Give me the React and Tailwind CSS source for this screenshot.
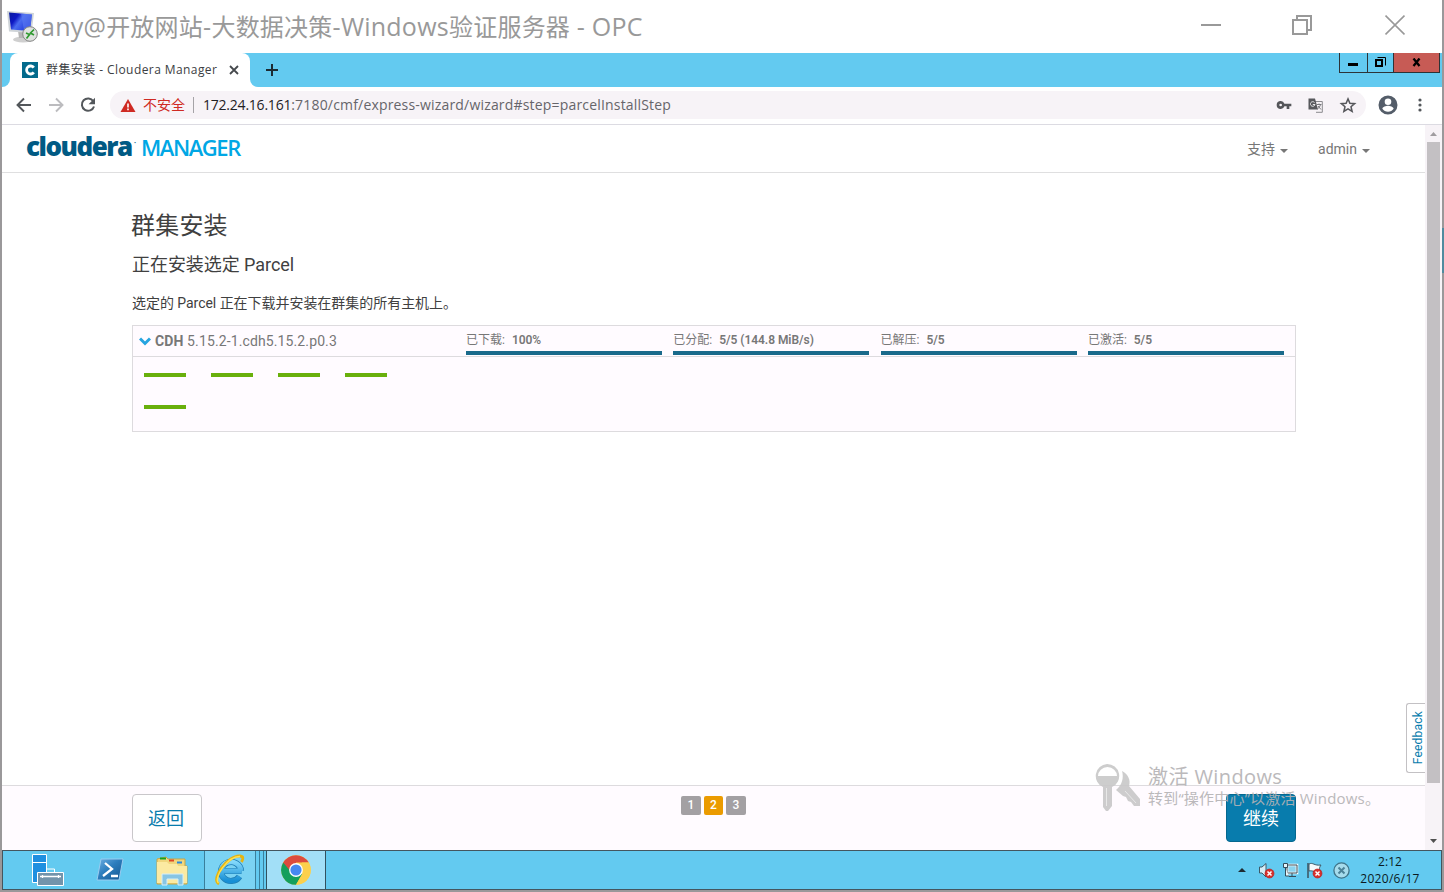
import React from 'react';

const segoe = "font-['Open_Sans','Noto_Sans_CJK_SC',sans-serif]";
const roboto = "font-['Roboto','Noto_Sans_CJK_SC',sans-serif]";

function RemoteIcon() {
  return (
    <svg width="32" height="34" viewBox="0 0 32 34" className="shrink-0">
      <defs>
        <linearGradient id="scr" x1="0" y1="0" x2="1" y2="0.6">
          <stop offset="0" stopColor="#0a1c9c" />
          <stop offset="0.35" stopColor="#0d18c4" />
          <stop offset="0.55" stopColor="#4a6cf0" />
          <stop offset="1" stopColor="#2038d8" />
        </linearGradient>
      </defs>
      <ellipse cx="17" cy="29.5" rx="10" ry="3" fill="#cfcfcf" />
      <path d="M12 21l9 1v6l-8 0z" fill="#b5b5b5" />
      <path d="M1 1L28 3l-2.500 20L3 21.500z" fill="#cfd4d8" />
      <path d="M3 2.500L26 4.500l-2 16.500L5 19.500z" fill="url(#scr)" />
      <path d="M15 3.600L26 4.500l-2 16.500-6-.5z" fill="#5b7cf2" opacity="0.6" />
      <circle cx="24" cy="24" r="7.300" fill="#dfe2df" stroke="#858585" />
      <path d="M20 23l3.500 1.500-3 4M28 19.500l-3.500 3.500 3.500 2" fill="none" stroke="#2f9a2f" strokeWidth="1.700" />
    </svg>
  );
}

function TitleBar() {
  return (
    <div className="flex h-[53px] shrink-0 items-start bg-white">
      <div className="pl-1 pt-[10px]"><RemoteIcon /></div>
      <div className={`${segoe} ml-[3px] mt-[8px] whitespace-nowrap text-[25px] leading-[36px] tracking-[0.24px] text-[#999]`}>
        any@<span className="text-[24px]">开放网站</span>-<span className="text-[24px]">大数据决策</span>-Windows<span className="text-[24px]">验证服务器</span> - OPC
      </div>
      <div className="ml-auto flex items-center pr-[37px] pt-[14px]">
        <div className="mr-[71px] h-[2px] w-5 bg-[#999]" />
        <svg width="20" height="22" viewBox="0 0 20 22" fill="none" stroke="#999" strokeWidth="2" className="mr-[73px]">
          <path d="M1 6h14v14H1zM5 5.500V2h14v14h-3.500" />
        </svg>
        <svg width="20" height="22" viewBox="0 0 20 22" fill="none" stroke="#999" strokeWidth="1.700">
          <path d="M0.500 1.500l19 19M19.500 1.500l-19 19" />
        </svg>
      </div>
    </div>
  );
}

function TabStrip() {
  return (
    <div className="flex h-[34px] shrink-0 bg-white">
      <div className="w-2 shrink-0 rounded-br-[8px] bg-[#63caf0]" />
      <div className="flex w-[240px] shrink-0 bg-[#63caf0]">
        <div className="flex w-full items-center rounded-t-[8px] bg-white pl-3">
          <svg width="16" height="16" viewBox="0 0 16 16">
            <path d="M0 0h16v16H0z" fill="#036a8c" />
            <path d="M11.800 5.600A4 4 0 1 0 11.800 10.400" fill="none" stroke="#fff" strokeWidth="2.800" />
          </svg>
          <span className={`${segoe} ml-2 w-[180px] whitespace-nowrap text-[12px] tracking-[0.42px] text-[#3c4043]`}>群集安装 - Cloudera Manager</span>
          <svg width="10" height="10" viewBox="0 0 10 10" className="ml-[3px] shrink-0" stroke="#45494d" strokeWidth="1.800">
            <path d="M1 1l8 8M9 1l-8 8" />
          </svg>
        </div>
      </div>
      <div className="flex flex-1 rounded-bl-[8px] bg-[#63caf0]">
        <svg width="12" height="12" viewBox="0 0 12 12" className="ml-4 mt-[11px]" stroke="#1c2b33" strokeWidth="2">
          <path d="M0 6h12M6 0v12" />
        </svg>
        <div className="ml-auto mr-[2px] flex h-5 border-x border-b border-[#2d3337]">
          <div className="flex w-[27px] justify-center pr-px pt-[10px]"><div className="h-[3px] w-[10px] bg-black" /></div>
          <div className="flex w-[26px] justify-center border-l border-[#2d3337] pt-1">
            <svg width="11" height="11" viewBox="0 0 11 11" fill="none" stroke="#000">
              <path d="M1 3h6v6H1z" strokeWidth="2" />
              <path d="M2.500 .5h8v8" />
            </svg>
          </div>
          <div className="flex w-[46px] justify-center border-l border-[#2d3337] bg-[#c75b55] pt-[5px]">
            <svg width="10" height="9" viewBox="0 0 10 9" stroke="#000" strokeWidth="2.300"><path d="M1.500 .5l6 7.500M7.500 .5l-6 7.500" /></svg>
          </div>
        </div>
      </div>
    </div>
  );
}

function Toolbar() {
  return (
    <div className="flex h-[38px] shrink-0 items-center border-b border-[#dcdbe2] bg-white pb-px">
      <svg width="16" height="16" viewBox="0 0 16 16" className="ml-[14px]" fill="none" stroke="#53575b" strokeWidth="1.900">
        <path d="M15 8H2M8 1.500L1.500 8 8 14.500" />
      </svg>
      <svg width="16" height="16" viewBox="0 0 16 16" className="ml-4" fill="none" stroke="#bcbcbf" strokeWidth="1.900">
        <path d="M1 8h13M8 1.500L14.500 8 8 14.500" />
      </svg>
      <svg width="16" height="16" viewBox="0 0 16 16" className="ml-4" fill="none" stroke="#53575b" strokeWidth="2">
        <path d="M13.300 4.200A6.200 6.200 0 1 0 14 9.500" />
        <path d="M15 .8v6.400H8.600z" fill="#53575b" stroke="none" />
      </svg>
      <div className="ml-[14px] flex h-7 w-[1256px] items-center rounded-full bg-[#f7f3f7]">
        <svg width="16" height="13" viewBox="0 0 16 13" className="ml-[10px]">
          <path d="M8 0l7.500 13H.5z" fill="#cf2a23" />
          <path d="M7.200 4.500h1.600v4H7.200zM7.200 9.600h1.600v1.600H7.200z" fill="#fff" />
        </svg>
        <span className={`${segoe} ml-[7px] mt-[-2px] text-[14px] text-[#cf2a23]`}>不安全</span>
        <div className="ml-2 h-4 w-px bg-[#a5a3a7]" />
        <span className={`${segoe} ml-[9px] mt-[-2px] whitespace-nowrap text-[14px] tracking-[0.18px] text-[#66656a]`}>
          <span className="tracking-[-0.22px] text-[#1f2124]">172.24.16.161</span>:7180/cmf/express-wizard/wizard#step=parcelInstallStep
        </span>
        <svg width="16" height="16" viewBox="0 0 24 24" className="ml-auto" fill="#55565a">
          <path d="M12.650 10A6 6 0 0 0 1 12a6 6 0 0 0 11.650 2H16v4h4v-4h3v-4zM7 14a2 2 0 1 1 0-4 2 2 0 0 1 0 4z" />
        </svg>
        <svg width="15" height="15" viewBox="0 0 15 15" className="ml-4">
          <path d="M5.500 3.500h8.800v10.800H8" fill="#f7f3f7" stroke="#8a8a8e" />
          <path d="M.5.500h6.500l3 11H.5z" fill="#57585c" />
          <path d="M6.500 4.500A2.300 2.300 0 1 0 7 6.500H4.800" fill="none" stroke="#e8e8ea" />
          <path d="M8.500 6.500h5M11 5.500v1M12.500 6.500c-.5 2-1.500 3.500-3 4.500M10 8l3 3.500" fill="none" stroke="#77787c" />
        </svg>
        <svg width="18" height="18" viewBox="0 0 24 24" className="ml-4 mr-[9px]" fill="none" stroke="#55565a" strokeWidth="2">
          <path d="M12 3.800l2.500 5.900 6.400.5-4.900 4.200 1.500 6.200-5.500-3.300-5.500 3.300L8 14.400 3.100 10.200l6.400-.5z" />
        </svg>
      </div>
      <svg width="24" height="24" viewBox="0 0 24 24" className="ml-[10px]" fill="#545d69">
        <path d="M12 2.500a9.500 9.500 0 1 0 0 19 9.500 9.500 0 0 0 0-19zm0 3a3.300 3.300 0 1 1 0 6.600 3.300 3.300 0 0 1 0-6.600zm0 13.200a6.700 6.700 0 0 1-5.600-3c0-1.900 3.800-2.900 5.600-2.900s5.600 1 5.600 2.900a6.700 6.700 0 0 1-5.600 3z" />
      </svg>
      <svg width="4" height="14" viewBox="0 0 4 14" className="ml-[18px]" fill="#53575b">
        <circle cx="2" cy="2" r="1.600" /><circle cx="2" cy="7" r="1.600" /><circle cx="2" cy="12" r="1.600" />
      </svg>
    </div>
  );
}

function Caret() {
  return <svg width="8" height="4" viewBox="0 0 8 4" className="mt-[3px]"><path d="M0 0h8L4 4z" fill="#777" /></svg>;
}

function ClouderaHeader() {
  return (
    <div className={`flex h-12 shrink-0 items-start border-b border-[#dfdfe0] bg-white pl-[24px] ${roboto}`}>
      <div className="mt-[5px] flex items-baseline whitespace-nowrap leading-[32px]">
        <span className="w-[108px] font-['Open_Sans',sans-serif] text-[26px] font-extrabold tracking-[-1.5px] text-[#005a84]">cloudera</span>
        <span className="w-[3px] text-[6px] text-[#005a84]"><span className="relative top-[-11px]">•</span></span>
        <span className="ml-[4px] font-['Open_Sans',sans-serif] text-[22px] font-semibold tracking-[-1.45px] text-[#00a7e5]">MANAGER</span>
      </div>
      <div className="ml-auto flex items-center gap-[5px] pt-[14px] text-[14px] leading-[20px] text-[#777]">
        支持 <Caret />
      </div>
      <div className="ml-[30px] mr-[55px] flex items-center gap-[5px] pt-[14px] text-[14px] leading-[20px] text-[#777]">
        admin <Caret />
      </div>
    </div>
  );
}

const stages = [
  ['已下载:', '100%'],
  ['已分配:', '5/5 (144.8 MiB/s)'],
  ['已解压:', '5/5'],
  ['已激活:', '5/5'],
];

function ParcelTable() {
  return (
    <div className="mt-[12px] h-[107px] w-[1164px] border border-[#dddbde] bg-[#fffbff]">
      <div className="flex h-[31px] border-b border-[#dddbde] text-[#777]">
        <div className="flex w-[333px] items-center pl-[6px] text-[14px]">
          <svg width="12" height="9" viewBox="0 0 12 9" fill="none" stroke="#27a5e0" strokeWidth="3"><path d="M1 1.500l5 5 5-5" /></svg>
          <span className="ml-[4px] whitespace-nowrap tracking-[0.12px]"><b>CDH</b> 5.15.2-1.cdh5.15.2.p0.3</span>
        </div>
        <div className="flex gap-[11.300px]">
          {stages.map(([label, value]) => (
            <div key={label} className="flex w-[196px] flex-col">
              <div className="flex h-[25px] items-center gap-[7px] whitespace-nowrap pt-[3px] text-[12px]">
                <span>{label}</span>
                <b className="font-semibold tracking-[-0.05px]">{value}</b>
              </div>
              <div className="h-1 bg-[#196a8b]" />
            </div>
          ))}
        </div>
      </div>
      <div className="grid w-[279px] grid-cols-4 gap-y-7 pl-[11px] pt-4">
        {[0, 1, 2, 3, 4].map((n) => <div key={n} className="w-[67px]"><div className="h-1 w-[42px] bg-[#69b00c]" /></div>)}
      </div>
    </div>
  );
}

function ScrollBar() {
  return (
    <div className="flex w-[17px] shrink-0 flex-col items-center bg-[#f7f3f7]">
      <svg width="7" height="4" viewBox="0 0 7 4" className="mt-[7px]"><path d="M0 4h7L3.500 0z" fill="#a09da0" /></svg>
      <div className="mt-[6px] h-[641px] w-[13px] bg-[#c3c0c3]" />
      <svg width="7" height="4" viewBox="0 0 7 4" className="mb-[7px] mt-auto"><path d="M0 0h7L3.500 4z" fill="#505050" /></svg>
    </div>
  );
}

function Footer() {
  return (
    <div className={`flex h-[65px] shrink-0 items-start justify-between border-t border-[#dddbde] bg-[#fffbff] pl-[130px] pr-[129px] pt-2 ${roboto}`}>
      <div className="flex h-12 w-[70px] items-center justify-center rounded-[4px] border border-[#c9c7ca] bg-white pr-[2px] text-[18px] text-[#087cad]">返回</div>
      <div className="mr-[1px] mt-[2px] flex gap-[3px] text-center text-[12px] font-medium leading-[19px] text-white">
        <div className="w-5 rounded-[2px] bg-[#a3a0a3]">1</div>
        <div className="w-[19px] rounded-[2px] bg-[#eb9b00]">2</div>
        <div className="w-5 rounded-[2px] bg-[#a3a0a3]">3</div>
      </div>
      <div className="flex h-12 w-[70px] items-center justify-center rounded-[4px] border border-[#05678f] bg-[#087cad] text-[18px] text-white">继续</div>
    </div>
  );
}

function Watermark() {
  return (
    <div className={`absolute left-[1090px] top-[761px] flex text-[#b4b2b4] opacity-90 ${segoe}`}>
      <svg width="50" height="52" viewBox="0 0 50 52" fill="#c8c8c8">
        <path d="M30 10c6 3 9 9 7 15l11 13v7h-6l-3-4-3-1-2-4-3-1-7-6c6-5 8-12 6-19z" />
        <path fillRule="evenodd" d="M15 3a12 12 0 0 1 5 23v19l-4 5h-2l-3-4V26A12 12 0 0 1 15 3zM6 15h19a9.500 9 0 0 0-19 0z" />
        <path d="M14.500 27v18M33 30l11 12" stroke="#e6e6e6" strokeWidth="1" />
      </svg>
      <div className="ml-[6px] whitespace-nowrap">
        <div className="text-[20px] leading-[32px] tracking-[0.4px]">激活 Windows</div>
        <div className="mt-[-6px] text-[15px] leading-[22px] tracking-[0.2px]">转到“操作中心”以激活 Windows。</div>
      </div>
    </div>
  );
}

function ErrorBadge() {
  return <g><circle cx="11.500" cy="11.500" r="4.500" fill="#d8302c" stroke="#b01d1d" strokeWidth=".6" /><path d="M9.500 9.500l4 4M13.500 9.500l-4 4" stroke="#fff" strokeWidth="1.500" /></g>;
}

function Taskbar() {
  return (
    <div className="flex h-10 shrink-0 border border-[#44565f] bg-[#63caf0]">
      <svg width="34" height="34" viewBox="0 0 34 34" className="ml-[28px] mt-[2px]">
        <path d="M1.500 1.500h14v28h-14z" fill="#1f8fe0" stroke="#fff" />
        <path d="M1.500 9.500h14" stroke="#fff" />
        <path d="M15.500 17v-1h8v3" fill="none" stroke="#fff" />
        <path d="M6.500 19.500h26v13h-26z" fill="#7394ab" stroke="#fff" />
        <path d="M9 23.500h21M11.500 22v3M27.500 22v3" stroke="#fff" strokeWidth="1.300" />
      </svg>
      <svg width="30" height="26" viewBox="0 0 30 26" className="ml-[29px] mt-[6px]">
        <defs><linearGradient id="ps" x1="0" y1="0" x2="1" y2="1"><stop stopColor="#6fb0e4" /><stop offset=".45" stopColor="#2c7dbd" /><stop offset="1" stopColor="#14568f" /></linearGradient></defs>
        <path d="M7 2h22l-4 21H3z" fill="url(#ps)" stroke="#9accf0" />
        <path d="M11 6l7 6-9 7M17 19h7" fill="none" stroke="#fff" strokeWidth="2.300" />
      </svg>
      <svg width="34" height="30" viewBox="0 0 34 30" className="ml-[31px] mt-[5px]">
        <path d="M2 3l9-2 2 2h17v7h2v18H2z" fill="#f0d77d" stroke="#c9a545" />
        <path d="M5 1.500h6v2H5z" fill="#18a020" /><path d="M14 3.500h5v2h-5z" fill="#e04824" /><path d="M22 5.500h5v2h-5z" fill="#2a88dc" />
        <path d="M2 6l10 0 2 2h8l1 2h9v17H2z" fill="#fbeaa2" />
        <path d="M7 18h21v11h-5v-6H12v6H7z" fill="#87c5e4" stroke="#d5eff9" />
      </svg>
      <div className="ml-[15px] flex w-[52px] items-center justify-center border-x border-[#397f9c] bg-[#7bd3f3]">
        <svg width="32" height="32" viewBox="0 0 32 32">
          <defs><linearGradient id="ie" x1="0" y1="0" x2="0" y2="1"><stop stopColor="#82d8fa" /><stop offset="1" stopColor="#168ed5" /></linearGradient></defs>
          <path d="M27 17A10 9.500 0 1 0 25.500 22.500M9 17h18.500" fill="none" stroke="#207eb4" strokeWidth="6.200" />
          <path d="M27 17A10 9.500 0 1 0 25.500 22.500M9 17h18.500" fill="none" stroke="url(#ie)" strokeWidth="4.800" />
          <path d="M5 30C-4 25 14 1 26 2c4 .5 3 3 1.500 6" fill="none" stroke="#e6b40f" strokeWidth="2.800" />
          <path d="M4.500 29C-1 24 14 2 26 2.500" fill="none" stroke="#ffe050" strokeWidth="1.400" />
        </svg>
      </div>
      <div className="w-1 border-r border-[#397f9c]" />
      <div className="w-1 border-r border-[#397f9c]" />
      <div className="ml-[2px] flex w-[60px] items-center justify-center border-x border-[#31515f] bg-[#a2dff7]">
        <svg width="30" height="30" viewBox="0 0 30 30">
          <circle cx="15" cy="15" r="14.800" fill="#fcd04c" />
          <path d="M15 15L2.180 7.600A14.800 14.800 0 0 0 15 29.800L21.400 18.700z" fill="#149f5c" />
          <path d="M15 15h-6.500L2.180 7.600A14.800 14.800 0 0 1 27.800 7.600H15z" fill="#dc4b3e" />
          <path d="M15 29.800l6.400-11.100L15 15l6-7.400h6.800A14.800 14.800 0 0 1 15 29.800z" fill="#fcd04c" />
          <circle cx="15" cy="15" r="6.900" fill="#fff" /><circle cx="15" cy="15" r="5.600" fill="#4688f1" />
        </svg>
      </div>
      <div className="ml-auto flex h-full items-center">
        <svg width="8" height="4" viewBox="0 0 8 4"><path d="M0 4h8L4 0z" fill="#1e2c33" /></svg>
        <svg width="17" height="17" viewBox="0 0 17 17" className="ml-[12px]">
          <path d="M1.500 5v6h2.500l4 4V1.500L4 5z" fill="#d5edf7" stroke="#3e5967" /><ErrorBadge />
        </svg>
        <svg width="17" height="17" viewBox="0 0 17 17" className="ml-[7px]">
          <path d="M5 3h10v8H5z" fill="#8bd4ef" stroke="#fff" strokeWidth="2.600" /><path d="M5 3h10v8H5zM7 14.500h7M10 11v3" fill="none" stroke="#344c59" />
          <path d="M1.500 1.500h4v4h-4zM3.500 6v8H7" fill="#e8f6fb" stroke="#344c59" />
        </svg>
        <svg width="17" height="17" viewBox="0 0 17 17" className="ml-[7px]">
          <path d="M2 1v15" stroke="#3e5967" strokeWidth="1.600" /><path d="M3 2c4-2 5 2 12 1-2 3-2 4 0 7-6 1-8-2-12-1z" fill="#f4fafc" stroke="#3e5967" /><ErrorBadge />
        </svg>
        <svg width="17" height="17" viewBox="0 0 17 17" className="ml-[10px]">
          <circle cx="8.500" cy="8.500" r="7.600" fill="#a6dcec" stroke="#3f7488" strokeWidth="1.300" /><path d="M5.500 5.500l6 6M11.500 5.500l-6 6" stroke="#4b8297" strokeWidth="2" />
        </svg>
        <div className={`${segoe} ml-2 mr-[19px] w-[64px] whitespace-nowrap text-center text-[12px] leading-[17px] tracking-[0.3px] text-[#0b1a22]`}>
          <div className="tracking-[0.1px]">2:12</div>
          <div>2020/6/17</div>
        </div>
      </div>
    </div>
  );
}

export default function App() {
  return (
    <div className="relative flex h-[892px] w-[1444px] flex-col border-x-2 border-b-2 border-[#9a989a] bg-white">
      <TitleBar />
      <TabStrip />
      <Toolbar />
      <div className="flex min-h-0 flex-1">
        <div className="flex min-w-0 flex-1 flex-col">
          <ClouderaHeader />
          <main className={`flex min-h-0 flex-1 ${roboto}`}>
            <div className="flex-1 pl-[130px] pt-[36px] text-[#404040]">
              <h1 className="ml-[-1px] text-[24px] leading-[34px] tracking-[0.2px]">群集安装</h1>
              <h2 className="mt-[9px] text-[18px] leading-[26px] tracking-[-0.05px]">正在安装选定 Parcel</h2>
              <p className="mt-[15px] text-[14px] leading-[20px] tracking-[-0.04px]">选定的 Parcel 正在下载并安装在群集的所有主机上。</p>
              <ParcelTable />
            </div>
            <div className="mb-[12px] flex h-[70px] w-[19px] shrink-0 items-center justify-center self-end rounded-l-[3px] border border-r-0 border-[#c3c1c4] bg-white pl-1">
              <span className="rotate-180 text-[12px] leading-none tracking-[0.2px] text-[#087cad] [writing-mode:vertical-rl]">Feedback</span>
            </div>
          </main>
          <Footer />
        </div>
        <ScrollBar />
      </div>
      <Taskbar />
      <Watermark />
      <div className="absolute right-[-2px] top-[228px] h-[45px] w-[2px] bg-[#4f8b9f]" />
    </div>
  );
}
